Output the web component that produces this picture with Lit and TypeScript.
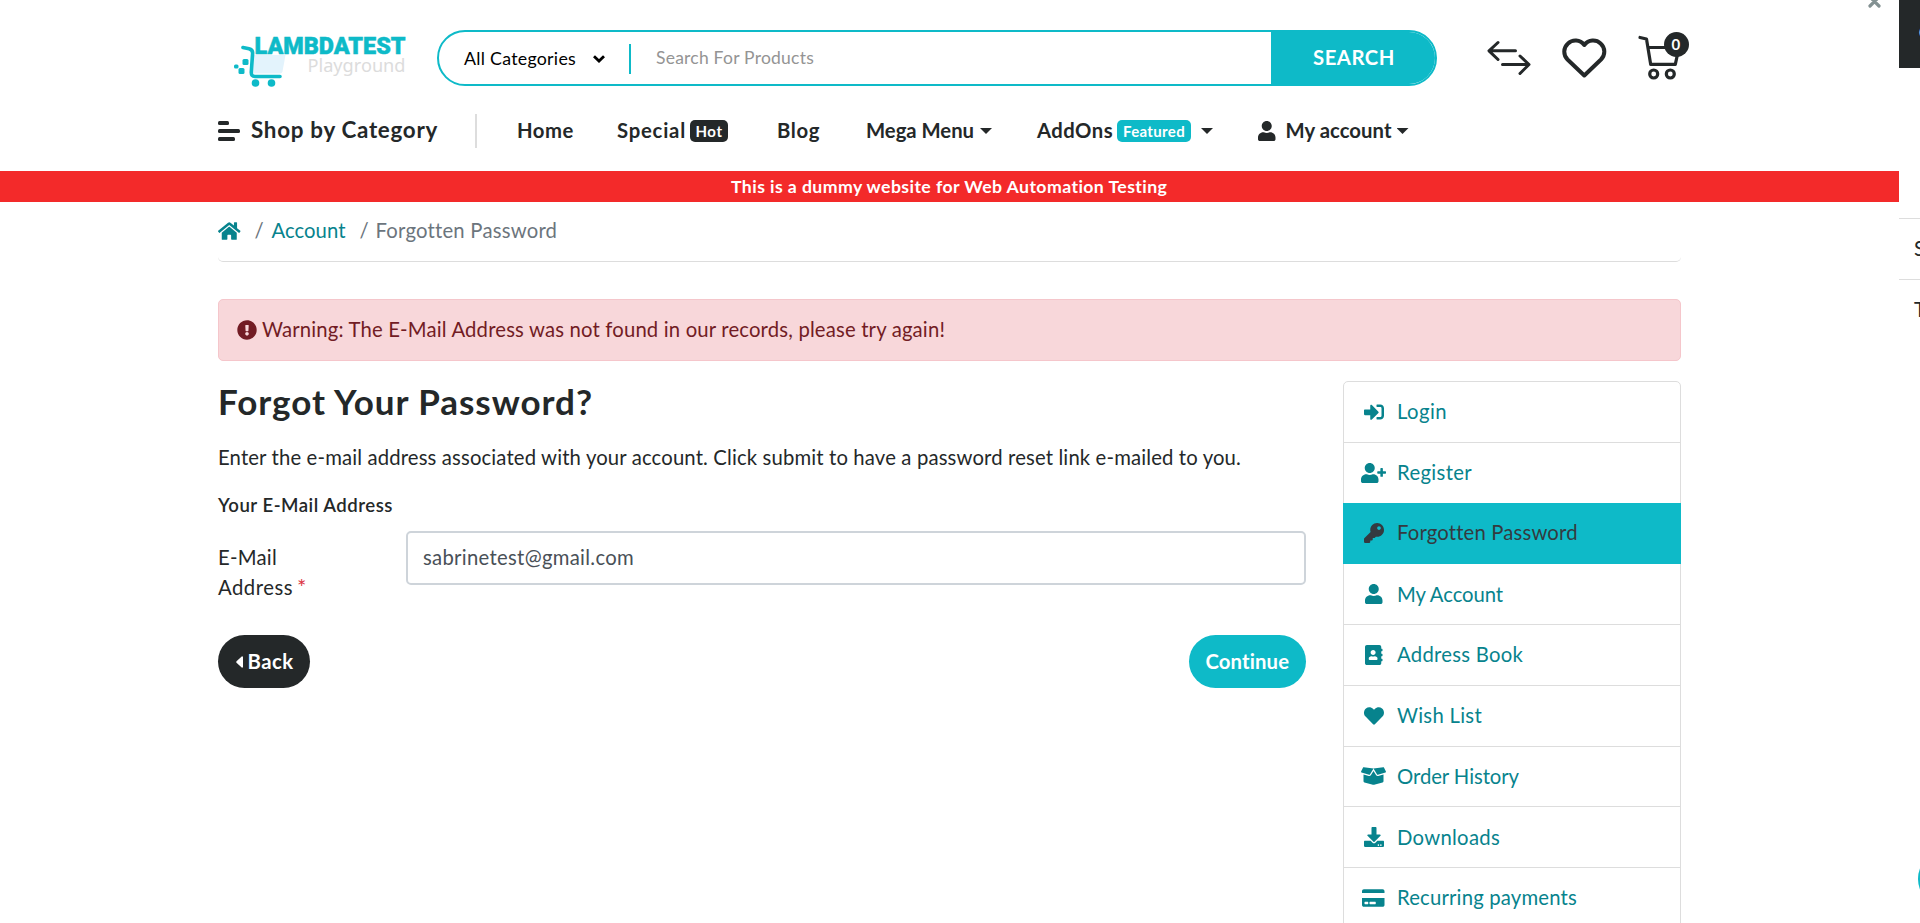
import { LitElement, html, css, svg, nothing } from "lit";
import { customElement, property } from "lit/decorators.js";

const ICONS: Record<string, [number, string]> = {
  user: [448, "M224 256c70.7 0 128-57.3 128-128S294.7 0 224 0 96 57.3 96 128s57.3 128 128 128zm89.6 32h-16.7c-22.2 10.2-46.9 16-72.9 16s-50.6-5.8-72.9-16h-16.7C60.2 288 0 348.2 0 422.4V464c0 26.5 21.5 48 48 48h352c26.5 0 48-21.5 48-48v-41.6c0-74.2-60.2-134.4-134.4-134.4z"],
  userPlus: [640, "M624 208h-64v-64c0-8.8-7.2-16-16-16h-32c-8.8 0-16 7.2-16 16v64h-64c-8.8 0-16 7.2-16 16v32c0 8.8 7.2 16 16 16h64v64c0 8.8 7.2 16 16 16h32c8.8 0 16-7.2 16-16v-64h64c8.8 0 16-7.2 16-16v-32c0-8.8-7.2-16-16-16zm-400 48c70.7 0 128-57.3 128-128S294.7 0 224 0 96 57.3 96 128s57.3 128 128 128zm89.6 32h-16.7c-22.2 10.2-46.9 16-72.9 16s-50.6-5.8-72.9-16h-16.7C60.2 288 0 348.2 0 422.4V464c0 26.5 21.5 48 48 48h352c26.5 0 48-21.5 48-48v-41.6c0-74.2-60.2-134.4-134.4-134.4z"],
  login: [512, "M416 448h-84c-6.6 0-12-5.4-12-12v-40c0-6.6 5.4-12 12-12h84c17.7 0 32-14.3 32-32V160c0-17.7-14.3-32-32-32h-84c-6.6 0-12-5.4-12-12V76c0-6.6 5.4-12 12-12h84c53 0 96 43 96 96v192c0 53-43 96-96 96zm-47-201L201 79c-15-15-41-4.5-41 17v96H24c-13.3 0-24 10.7-24 24v96c0 13.3 10.7 24 24 24h136v96c0 21.5 26 32 41 17l168-168c9.3-9.4 9.3-24.6 0-34z"],
  key: [512, "M512 176.001C512 273.203 433.202 352 336 352c-11.22 0-22.19-1.062-32.827-3.069l-24.012 27.014A23.999 23.999 0 0 1 261.223 384H224v40c0 13.255-10.745 24-24 24h-40v40c0 13.255-10.745 24-24 24H24c-13.255 0-24-10.745-24-24v-78.059c0-6.365 2.529-12.47 7.029-16.971l161.802-161.802C163.108 213.814 160 195.271 160 176 160 78.798 238.797.001 335.999 0 433.488-.001 512 78.511 512 176.001zM336 128c0 26.51 21.49 48 48 48s48-21.49 48-48-21.49-48-48-48-48 21.49-48 48z"],
  book: [448, "M436 160c6.6 0 12-5.4 12-12v-40c0-6.6-5.4-12-12-12h-20V48c0-26.5-21.5-48-48-48H48C21.5 0 0 21.5 0 48v416c0 26.5 21.5 48 48 48h320c26.5 0 48-21.5 48-48v-48h20c6.6 0 12-5.4 12-12v-40c0-6.6-5.4-12-12-12h-20v-64h20c6.6 0 12-5.4 12-12v-40c0-6.6-5.4-12-12-12h-20v-64h20zm-228-32c35.3 0 64 28.7 64 64s-28.7 64-64 64-64-28.7-64-64 28.7-64 64-64zm112 236.8c0 10.6-10 19.2-22.4 19.2H118.4C106 384 96 375.4 96 364.8v-19.2c0-31.8 30.1-57.6 67.2-57.6h5c12.3 5.1 25.7 8 39.8 8s27.6-2.9 39.8-8h5c37.1 0 67.2 25.8 67.2 57.6v19.2z"],
  heart: [512, "M462.3 62.6C407.5 15.9 326 24.3 275.7 76.2L256 96.5l-19.7-20.3C186.1 24.3 104.5 15.9 49.7 62.6c-62.8 53.6-66.1 149.8-9.9 207.9l193.5 199.8c12.5 12.9 32.8 12.9 45.3 0l193.5-199.8c56.3-58.1 53-154.3-9.8-207.9z"],
  box: [640, "M425.7 256c-16.9 0-32.8-9-41.4-23.4L320 126l-64.2 106.6c-8.7 14.5-24.6 23.5-41.5 23.5-4.5 0-9-.6-13.3-1.9L64 215v178c0 14.7 10 27.5 24.2 31l216.2 54.1c10.2 2.5 20.9 2.5 31 0L551.8 424c14.2-3.6 24.2-16.4 24.2-31V215l-137 39.1c-4.3 1.3-8.8 1.9-13.3 1.9zm212.6-112.2L586.8 41c-3.1-6.2-9.8-9.8-16.7-8.9L320 64l91.7 152.1c3.8 6.3 11.4 9.3 18.5 7.3l197.9-56.5c9.9-2.9 14.7-13.9 10.2-23.1zM53.2 41L1.7 143.8c-4.6 9.2.3 20.2 10.1 23l197.9 56.5c7.1 2 14.7-1 18.5-7.3L320 64 69.8 32.1c-6.9-.8-13.5 2.7-16.6 8.9z"],
  download: [512, "M216 0h80c13.3 0 24 10.7 24 24v168h87.7c17.8 0 26.7 21.5 14.1 34.1L269.7 378.3c-7.5 7.5-19.8 7.5-27.3 0L90.1 226.1c-12.6-12.6-3.7-34.1 14.1-34.1H192V24c0-13.3 10.7-24 24-24zm296 376v112c0 13.3-10.7 24-24 24H24c-13.3 0-24-10.7-24-24V376c0-13.3 10.7-24 24-24h146.7l49 49c20.1 20.1 52.5 20.1 72.6 0l49-49H488c13.3 0 24 10.7 24 24zm-124 88c0-11-9-20-20-20s-20 9-20 20 9 20 20 20 20-9 20-20zm64 0c0-11-9-20-20-20s-20 9-20 20 9 20 20 20 20-9 20-20z"],
  card: [576, "M0 432c0 26.5 21.5 48 48 48h480c26.5 0 48-21.5 48-48V256H0v176zm192-68c0-6.6 5.4-12 12-12h136c6.6 0 12 5.4 12 12v40c0 6.6-5.4 12-12 12H204c-6.6 0-12-5.4-12-12v-40zm-128 0c0-6.6 5.4-12 12-12h72c6.6 0 12 5.4 12 12v40c0 6.6-5.4 12-12 12H76c-6.6 0-12-5.4-12-12v-40zM576 80v48H0V80c0-26.5 21.5-48 48-48h480c26.5 0 48 21.5 48 48z"],
  home: [576, "M280.37 148.26L96 300.11V464a16 16 0 0 0 16 16l112.06-.29a16 16 0 0 0 15.92-16V368a16 16 0 0 1 16-16h64a16 16 0 0 1 16 16v95.64a16 16 0 0 0 16 16.05L464 480a16 16 0 0 0 16-16V300L295.67 148.26a12.19 12.19 0 0 0-15.3 0zM571.6 251.47L488 182.56V44.05a12 12 0 0 0-12-12h-56a12 12 0 0 0-12 12v72.61L318.47 43a48 48 0 0 0-61 0L4.34 251.47a12 12 0 0 0-1.6 16.9l25.5 31A12 12 0 0 0 45.15 301l235.22-193.74a12.19 12.19 0 0 1 15.3 0L530.9 301a12 12 0 0 0 16.9-1.6l25.5-31a12 12 0 0 0-1.7-16.93z"],
  warn: [512, "M504 256c0 136.997-111.043 248-248 248S8 392.997 8 256C8 119.083 119.043 8 256 8s248 111.083 248 248zm-248 50c-25.405 0-46 20.595-46 46s20.595 46 46 46 46-20.595 46-46-20.595-46-46-46zm-43.673-165.346l7.418 136c.347 6.364 5.609 11.346 11.982 11.346h48.546c6.373 0 11.635-4.982 11.982-11.346l7.418-136c.375-6.874-5.098-12.654-11.982-12.654h-63.383c-6.884 0-12.356 5.78-11.981 12.654z"],
};

/* Solid glyph, 20px tall, as wide as its own view box asks. */
const icon = (name: string) => {
  const [w, d] = ICONS[name];
  return html`<svg width=${(w / 512) * 20} height="20" viewBox="0 0 ${w} 512" fill="currentColor">${svg`<path d=${d}></path>`}</svg>`;
};

/* One line of text, tracked so that it fills the given width. */
@customElement("fit-text")
export class FitText extends LitElement {
  @property({ type: Number }) w = 0;
  @property() text = "";
  static styles = css`
    :host { display: block; flex: none; white-space: pre; line-height: 1.2; padding-bottom: 0.04em; }
    span { display: inline-block; }
  `;
  render() {
    return html`<span>${this.text}</span>`;
  }
  updated() {
    const span = this.renderRoot.querySelector("span")!;
    span.style.letterSpacing = "0";
    const natural = span.getBoundingClientRect().width;
    const gap = (this.w - natural) / this.text.length;
    span.style.letterSpacing = `${gap.toFixed(3)}px`;
    this.style.width = `${this.w}px`;
  }
}

const t = (text: string, w: number, cls = "") => html`<fit-text class=${cls || nothing} .text=${text} .w=${w}></fit-text>`;

const LINKS: [string, string, number][] = [
  ["login", "Login", 50],
  ["userPlus", "Register", 75],
  ["key", "Forgotten Password", 180],
  ["user", "My Account", 106],
  ["book", "Address Book", 126],
  ["heart", "Wish List", 85],
  ["box", "Order History", 122],
  ["download", "Downloads", 103],
  ["card", "Recurring payments", 180],
];

@customElement("app-root")
export class AppRoot extends LitElement {
  static styles = css`
    :host {
      display: block; position: relative; width: 1920px; height: 923px; overflow: hidden;
      background: #fff; color: #242829; font-family: Lato, "Open Sans", sans-serif; font-size: 20.3px;
      --teal: #0ebac8; --link: #07838d;
    }
    * { box-sizing: border-box; }
    svg { display: block; flex: none; overflow: visible; }
    .page { width: 1899px; }
    .wrap { margin: 0 218px; width: 1463px; }
    .row { display: flex; align-items: center; }

    .top { height: 116px; padding-left: 16px; align-items: flex-start; }
    .logo { margin-top: 30px; }
    .logo .name { font: 900 24px Roboto, sans-serif; fill: var(--teal); stroke: var(--teal); stroke-width: 0.5px; }
    .logo .sub { font: 400 18px "Noto Sans", sans-serif; fill: #dcdcdc; }
    .search { margin: 30px 0 0 28px; width: 1000px; height: 56px; border: 2px solid var(--teal); border-radius: 28px; overflow: hidden; padding-left: 25px; align-items: center; }
    .cat { font-size: 17.8px; color: #000; margin-top: 2px; }
    .chev { margin-left: 17px; margin-top: 2px; }
    .bar { width: 2px; height: 30px; background: var(--teal); margin: 2px 25px 0 24px; }
    .ph { font-size: 17.5px; color: #949494; margin-right: auto; }
    .go { width: 166px; height: 56px; background: var(--teal); color: #fff; font-weight: 700; display: flex; align-items: center; justify-content: center; margin-right: -2px; }
    .tool { margin-top: 30px; height: 56px; display: flex; align-items: center; position: relative; }
    .compare { margin-left: 50px; }
    .wish { margin-left: 32px; }
    .cart { margin-left: 31px; }
    .count { position: absolute; left: 25.5px; top: 2px; width: 25px; height: 25px; border-radius: 50%; background: #242829; color: #fff; font-size: 15px; font-weight: 700; display: flex; align-items: center; justify-content: center; }

    .nav { height: 55px; font-weight: 700; padding-bottom: 25px; }
    .nav > * { flex: none; }
    .shop { font-size: 22.4px; margin-left: 11px; }
    .sep { width: 2px; height: 34px; background: #ddd; margin: 0 40px 0 37px; }
    .badge { height: 22px; border-radius: 5px; background: #242829; color: #fff; font-size: 15px; display: flex; align-items: center; justify-content: center; width: 38px; margin-left: 4px; }
    .badge.teal { background: var(--teal); width: 74px; }
    .caret { width: 12px; height: 6px; background: currentColor; clip-path: polygon(0 0, 100% 0, 50% 100%); }
    .g5 { margin-left: 5px; } .g6 { margin-left: 6px; } .g10 { margin-left: 10px; }
    .g43 { margin-left: 43px; } .g45 { margin-left: 45px; } .g46 { margin-left: 46px; } .g49 { margin-left: 49px; }

    .strip { height: 31px; background: #f32a2a; color: #fff; font-weight: 700; font-size: 17.7px; display: flex; align-items: center; justify-content: center; }

    .crumbs { height: 60px; border-bottom: 1px solid #ddd; border-radius: 5px; padding-bottom: 1px; color: #6c757d; }
    .crumbs .here { margin-left: 9px; }
    .crumbs .lnk { margin-left: 10px; }
    .lnk, .homelink { color: var(--link); }
    .slash { margin-left: 14px; width: 7px; }

    .alert { height: 62px; margin-top: 37px; background: #f8d7da; border: 1px solid #f5c6cb; border-radius: 5px; color: #721c24; padding-left: 17.5px; }
    .alert fit-text { margin-left: 5.5px; }

    .body { display: flex; margin-top: 20px; height: 542px; }
    .main { width: 1088px; }
    h1, h2, p { margin: 0; font: inherit; }
    .title { font-size: 35px; font-weight: 700; height: 42px; display: flex; align-items: center; }
    .lead { height: 30px; margin-top: 20px; display: flex; align-items: center; }
    .legend { height: 24px; margin-top: 21px; display: flex; align-items: center; font-size: 18.6px; font-weight: 600; }
    .field { display: flex; margin-top: 13px; }
    .label { width: 188px; padding-top: 12px; }
    .line { height: 30px; display: flex; align-items: center; }
    .star { color: #dc3545; margin-left: 4px; font-size: 22px; }
    .input { width: 900px; height: 54px; border: 2px solid #ced4da; border-radius: 5px; padding-left: 15px; color: #495057; display: flex; align-items: center; }
    .actions { display: flex; justify-content: space-between; margin-top: 32px; }
    .btn { height: 53px; border-radius: 27px; color: #fff; font-weight: 700; display: flex; align-items: center; justify-content: center; }
    .back { width: 92px; background: #242829; padding-left: 1px; }
    .back svg { margin-right: 5px; }
    .cont { width: 117px; background: var(--teal); }

    .list { width: 338px; margin-left: 37px; height: 600px; border: 1px solid #ddd; border-radius: 5px 5px 0 0; }
    .item { height: 60.75px; border-bottom: 1px solid #ddd; color: var(--link); display: flex; align-items: center; }
    .item.on { background: var(--teal); color: #343a40; margin: -1px -1px 0; height: 61.75px; border-color: var(--teal); padding: 0 1px; }
    .ico { width: 25px; margin: 0 11px 0 17px; display: flex; justify-content: center; }

    .panel { position: absolute; left: 1899px; top: 0; width: 320px; height: 923px; background: #fff; }
    .head { height: 68px; background: #242829; color: #fff; }
    .head .row { padding: 19px 0 0 19.5px; font-size: 22px; }
    .void { height: 150px; }
    .opt { height: 61px; border-top: 1px solid #ddd; display: flex; align-items: center; padding-left: 15px; }
    .close { position: absolute; left: 1868px; top: -5px; }
    .dot { position: absolute; left: 1918px; top: 849px; width: 60px; height: 60px; border-radius: 50%; background: var(--teal); }
  `;

  logo() {
    return html`<svg class="logo" width="175" height="60" viewBox="0 0 175 60">
      <path d="M20 25H51.5L48.500 41.500Q48 43.500 46 43.500H19Z" fill="#e3f3fc"></path>
      <path d="M9 17.500L15 18.800Q19 19.800 18.600 23.500L17.300 42Q17 46.500 21 46.500H46" fill="none" stroke="#0ebac8" stroke-width="3.600" stroke-linecap="round"></path>
      <g fill="#0ebac8">
        <circle cx="21.500" cy="53" r="3.800"></circle><circle cx="37.500" cy="53" r="3.800"></circle>
        <rect x="8.500" y="29" width="6" height="6" rx="1.500"></rect><rect x="0" y="34.500" width="4.500" height="4" rx="1.500"></rect><rect x="4.500" y="38" width="6" height="6" rx="1.500"></rect>
      </g>
      <text class="name" x="20.500" y="23.500" textLength="151" lengthAdjust="spacingAndGlyphs">LAMBDATEST</text>
      <text class="sub" x="73.500" y="42" textLength="98" lengthAdjust="spacingAndGlyphs">Playground</text>
    </svg>`;
  }

  render() {
    return html`
      <div class="page">
        <header class="wrap">
          <div class="row top">
            ${this.logo()}
            <div class="row search">
              ${t("All Categories", 112, "cat")}
              <svg class="chev" width="12" height="8" viewBox="0 0 12 8" fill="none" stroke="#000" stroke-width="2.8"><path d="M1 1.2L6 6L11 1.2"></path></svg>
              <span class="bar"></span>
              ${t("Search For Products", 158, "ph")}
              <div class="go">${t("SEARCH", 82)}</div>
            </div>
            <div class="tool compare">
              <svg width="43" height="36" viewBox="0 0 43 36" fill="none" stroke="#242829" stroke-width="3" stroke-linecap="round" stroke-linejoin="round"><path d="M28.500 10.800H2.500M11 2.500L2 10.800L11 19.500M15.500 24.500H41M33 16L42 24.500L33 33.500"></path></svg>
            </div>
            <div class="tool wish">
              <svg width="45" height="40" viewBox="0 0 45 40" fill="none" stroke="#242829" stroke-width="4" stroke-linejoin="round"><path d="M22.300 7C18 1.500 10.500 1.200 6 5.500C1 10 1.200 17 5.500 21.500L22.300 37.500L39 21.500C43.400 17 43.600 10 38.600 5.500C34 1.200 26.600 1.500 22.300 7Z"></path></svg>
            </div>
            <div class="tool cart">
              <svg width="43" height="44" viewBox="0 0 43 44" fill="none" stroke="#242829" stroke-width="3.200" stroke-linecap="round" stroke-linejoin="round"><path d="M2 1.500L8.500 3L12.700 28.400H37.300L41 11.500H10.500"></path><circle cx="15.700" cy="38" r="4"></circle><circle cx="32.300" cy="38" r="4"></circle></svg>
              <span class="count">${t("0", 9)}</span>
            </div>
          </div>
          <nav class="row nav">
            <svg width="22" height="20" viewBox="0 0 22 20" fill="#242829"><rect width="11" height="4" rx="1.500"></rect><rect y="8" width="22" height="4" rx="1.500"></rect><rect y="16" width="17" height="4" rx="1.500"></rect></svg>
            ${t("Shop by Category", 187, "shop")}
            <span class="sep"></span>
            ${t("Home", 57)}
            ${t("Special", 69, "g43")}
            <span class="badge">${t("Hot", 27)}</span>
            ${t("Blog", 43, "g49")}
            ${t("Mega Menu", 108, "g46")}
            <span class="caret g6"></span>
            ${t("AddOns", 76, "g45")}
            <span class="badge teal">${t("Featured", 62)}</span>
            <span class="caret g10"></span>
            <span class="g45">${icon("user")}</span>
            ${t("My account", 106, "g10")}
            <span class="caret g5"></span>
          </nav>
        </header>
        <div class="strip">${t("This is a dummy website for Web Automation Testing", 437)}</div>
        <div class="wrap">
          <div class="row crumbs">
            <span class="homelink">${icon("home")}</span>
            <span class="slash">${t("/", 7)}</span>
            ${t("Account", 74, "lnk")}
            <span class="slash">${t("/", 7)}</span>
            ${t("Forgotten Password", 181, "here")}
          </div>
          <div class="row alert">${icon("warn")}${t("Warning: The E-Mail Address was not found in our records, please try again!", 683)}</div>
          <div class="body">
            <main class="main">
              <h1 class="title">${t("Forgot Your Password?", 375)}</h1>
              <p class="lead">${t("Enter the e-mail address associated with your account. Click submit to have a password reset link e-mailed to you.", 1023)}</p>
              <h2 class="legend">${t("Your E-Mail Address", 175)}</h2>
              <div class="field">
                <div class="label">
                  <div class="line">${t("E-Mail", 59)}</div>
                  <div class="line">${t("Address", 75)}<span class="star">${t("*", 9)}</span></div>
                </div>
                <div class="input">${t("sabrinetest@gmail.com", 211)}</div>
              </div>
              <div class="actions">
                <div class="btn back"><svg width="7" height="12" viewBox="0 0 7 12" fill="#fff"><path d="M7 1V11Q6.500 12 5.700 11.500L.5 6.800Q0 6 .5 5.200L5.700 .5Q6.500 0 7 1Z"></path></svg>${t("Back", 46)}</div>
                <div class="btn cont">${t("Continue", 84)}</div>
              </div>
            </main>
            <aside class="list">
              ${LINKS.map(([i, label, w]) => html`<div class="item ${label === "Forgotten Password" ? "on" : ""}"><span class="ico">${icon(i)}</span>${t(label, w)}</div>`)}
            </aside>
          </div>
        </div>
      </div>
      <svg class="close" width="13" height="13" viewBox="0 0 13 13" stroke="#839192" stroke-width="3.2" stroke-linecap="round"><path d="M2 2L11 11M11 2L2 11"></path></svg>
      <div class="panel">
        <div class="head"><div class="row">${t("Q", 16)}</div></div>
        <div class="void"></div>
        <div class="opt">${t("S", 12)}</div>
        <div class="opt">${t("T", 12)}</div>
      </div>
      <div class="dot"></div>
    `;
  }
}
